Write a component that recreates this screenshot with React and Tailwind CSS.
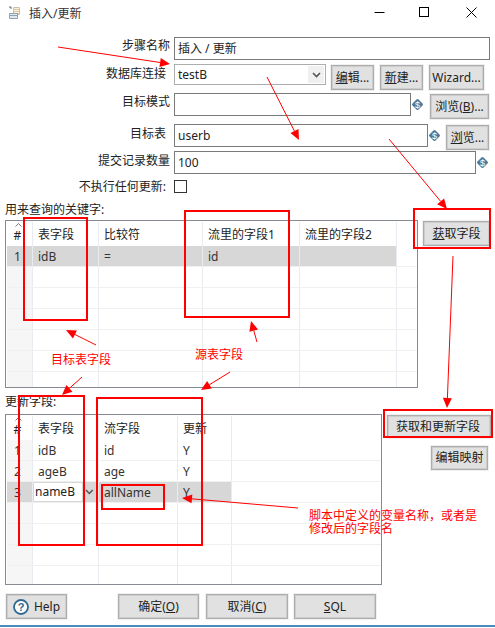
import React from 'react';

// botao padrao do dialogo
const Btn = ({ children, className = '' }) => (
  <button className={`flex items-center justify-center bg-[#e1e1e1] border border-[#adadad] shadow-[0_0_0_1px_#f0f0f0,inset_0_0_0_1px_#cdcdcd] text-[12px] text-[#222] ${className}`}>
    {children}
  </button>
);

const Var = () => (
  <svg width="13" height="13" viewBox="0 0 13 13" className="shrink-0">
    <rect x="2.2" y="2.2" width="8.6" height="8.6" rx="1.5" fill="#4f7a9a" transform="rotate(45 6.5 6.5)" />
    <text x="6.5" y="9.5" textAnchor="middle" fontSize="9" fill="#fff" fontFamily="Liberation Sans">$</text>
  </svg>
);

const Label = ({ children, className = '' }) => (
  <div className={`w-[174px] shrink-0 text-right text-[12px] text-[#222] pr-1 ${className}`}>{children}</div>
);

const Input = ({ value, w }) => (
  <div className={`h-[23px] border border-[#7a7a7a] bg-white flex items-center pl-[3px] text-[12px] text-[#222] ${w}`}>{value}</div>
);

const Table = ({ cols, width, height, columns, rows, selected }) => (
  <div className={`border border-[#868a91] bg-white overflow-hidden pl-px pt-px flex flex-col relative ${width} ${height}`}>
    <div className={`grid ${cols} h-[24px] shrink-0`}>
      {columns.map((c, i) => (
        <div key={i} className={`flex items-center text-[12px] text-[#222] border-r border-[#e8ebf0] relative ${i === 0 ? 'justify-center pr-[4px] pt-[3px]' : 'pl-[5px] pt-[2px]'}`}>
          {i === 0 && (
            <svg width="7" height="4" viewBox="0 0 7 4" className="absolute top-[1px] left-[8px]">
              <path d="M0.5 3.5L3.5 0.5L6.5 3.5" fill="none" stroke="#777" />
            </svg>
          )}
          {c}
        </div>
      ))}
      <div />
    </div>
    {Array.from({ length: 7 }).map((_, r) => {
      const row = rows[r];
      const isSel = r === selected;
      return (
        <div key={r} className={`grid ${cols} h-[21px] shrink-0 border-b border-[#f0f0f0]`}>
          {columns.map((_, i) => (
            <div key={i} className={`flex items-center text-[12px] text-[#333] border-r border-[#e8ebf0] pt-[2px] ${isSel ? 'bg-[#d7d7d7]' : i === 0 ? 'bg-[#f6f6f6]' : 'bg-white'} ${i === 0 ? 'justify-center pr-[4px]' : 'pl-[5px]'}`}>
              {row && row[i] && row[i].edit ? (
                <div className="flex items-center w-full h-full -ml-[4px] -mt-[2px]">
                  <div className="bg-white h-full w-[50px] pl-px text-[#222] leading-[18px]">{row[i].edit}</div>
                  <svg width="9" height="6" viewBox="0 0 9 6" className="ml-[3px]">
                    <path d="M1 1l3.5 3.5L8 1" fill="none" stroke="#555" strokeWidth="1.6" />
                  </svg>
                </div>
              ) : row ? row[i] : ''}
            </div>
          ))}
          <div />
        </div>
      );
    })}
  </div>
);

const Box = ({ className }) => (
  <div className={`absolute border-[2px] border-[#f00] pointer-events-none ${className}`} />
);

const Arrow = ({ x1, y1, x2, y2 }) => {
  const a = Math.atan2(y2 - y1, x2 - x1);
  const len = 10;
  const hw = 4.5;
  const bx = x2 - Math.cos(a) * len;
  const by = y2 - Math.sin(a) * len;
  const px = -Math.sin(a) * hw;
  const py = Math.cos(a) * hw;
  return (
    <g>
      <line x1={x1} y1={y1} x2={bx} y2={by} stroke="#f00" strokeWidth="1" />
      <polygon points={`${x2},${y2} ${bx + px},${by + py} ${bx - px},${by - py}`} fill="#f00" />
    </g>
  );
};

export default function App() {
  return (
    <div className="w-[495px] h-[628px] bg-white relative overflow-hidden font-['Noto_Sans','Noto_Sans_CJK_SC',sans-serif]">
      {/* barra de titulo */}
      <div className="h-[26px] flex items-center pl-[9px]">
        <svg width="12" height="13" viewBox="0 0 12 13" className="mb-[2px]">
          <path d="M4.5 1.5h6v7h-6z" fill="#f7efe0" stroke="#c9c2b4" />
          <path d="M5 3.5h5M5 5.5h5M5 7.5h5" stroke="#e3c9a0" />
          <path d="M0.5 7.5h8v5h-8z" fill="#dfe8ef" stroke="#8fa3b3" />
          <path d="M1 9.5h7" stroke="#8fa3b3" />
          <path d="M0.5 0.5l2 2" stroke="#5f7d94" strokeWidth="1.4" />
        </svg>
        <span className="ml-[8px] text-[12px] text-[#333] mt-px">插入/更新</span>
        <div className="ml-auto flex items-center mb-[2px]">
          <svg width="11" height="11" viewBox="0 0 11 11" className="mr-[34px]"><path d="M0.5 5.5h10" stroke="#000" /></svg>
          <svg width="10" height="10" viewBox="0 0 10 10" className="mr-[37px]"><rect x="0.5" y="0.5" width="9" height="9" fill="none" stroke="#000" /></svg>
          <svg width="11" height="11" viewBox="0 0 11 11" className="mr-[18px]"><path d="M0.5 0.5l10 10M10.5 0.5l-10 10" stroke="#000" /></svg>
        </div>
      </div>

      {/* formulario */}
      <div className="flex items-start mt-[11px] h-[23px]">
        <Label>步骤名称</Label>
        <Input value="插入 / 更新" w="w-[316px]" />
      </div>

      <div className="flex items-start mt-[4px] h-[26px]">
        <Label className="pr-2 mt-[1px]">数据库连接</Label>
        <div className="w-[152px] h-[21px] border border-[#adadad] flex items-center pl-[3px] text-[12px] text-[#222] relative">
          testB
          <div className="absolute right-[1px] top-[1px] bottom-[1px] w-[16px] bg-[#f0f0f0] flex items-center justify-center">
            <svg width="9" height="6" viewBox="0 0 9 6"><path d="M1 1l3.5 3.5L8 1" fill="none" stroke="#555" strokeWidth="1.6" /></svg>
          </div>
        </div>
        <Btn className="w-[43px] h-[25px] ml-[5px] mt-px"><u>编</u>辑...</Btn>
        <Btn className="w-[43px] h-[25px] ml-[6px] mt-px"><u>新</u>建...</Btn>
        <Btn className="w-[55px] h-[25px] ml-[6px] mt-px">Wizard...</Btn>
      </div>

      <div className="flex items-start mt-[3px] h-[26px]">
        <Label>目标模式</Label>
        <Input value="" w="w-[237px]" />
        <div className="h-[23px] flex items-center"><Var /></div>
        <Btn className="w-[59px] h-[25px] ml-[6px] mt-px">浏览(<u>B</u>)...</Btn>
      </div>

      <div className="flex items-start mt-[5px] h-[26px]">
        <Label className="pr-2 mt-px">目标表</Label>
        <Input value="userb" w="w-[254px]" />
        <div className="h-[23px] flex items-center"><Var /></div>
        <Btn className="w-[43px] h-[25px] ml-[5px] mt-px"><u>浏</u>览...</Btn>
      </div>

      <div className="flex items-start mt-px h-[23px]">
        <Label className="mt-px">提交记录数量</Label>
        <Input value="100" w="w-[302px]" />
        <div className="h-[23px] flex items-center"><Var /></div>
      </div>

      <div className="flex items-center mt-[6px] h-[13px]">
        <Label className="pr-2">不执行任何更新:</Label>
        <div className="w-[13px] h-[13px] border border-[#333] bg-white" />
      </div>

      <div className="ml-[5px] mt-[8px] h-[18px] text-[12px] leading-[16px] text-[#222] pt-px">用来查询的关键字:</div>

      <div className="flex items-start ml-[5px] mt-[1px] h-[168px]">
        <Table
          cols="grid-cols-[26px_66px_104px_97px_97px_1fr]"
          width="w-[413px]"
          height="h-[168px]"
          columns={['#', '表字段', '比较符', '流里的字段1', '流里的字段2']}
          rows={[['1', 'idB', '=', 'id', '']]}
          selected={0}
        />
        <Btn className="w-[67px] h-[25px] ml-[5px] mt-px"><u>获</u>取字段</Btn>
      </div>

      <div className="ml-[5px] mt-[6px] h-[20px] text-[12px] leading-[16px] text-[#222]">更新字段:</div>

      <div className="flex items-start ml-[5px] h-[171px]">
        <Table
          cols="grid-cols-[26px_66px_79px_54px_1fr]"
          width="w-[377px]"
          height="h-[171px]"
          columns={['#', '表字段', '流字段', '更新']}
          rows={[
            ['1', 'idB', 'id', 'Y'],
            ['2', 'ageB', 'age', 'Y'],
            ['3', { edit: 'nameB' }, 'allName', 'Y'],
          ]}
          selected={2}
        />
        <div className="flex flex-col items-end ml-[5px] mt-px">
          <Btn className="w-[104px] h-[23px] pr-[2px]">获取和更新字段</Btn>
          <Btn className="w-[57px] h-[24px] mt-[8px] mr-[3px]">编辑映射</Btn>
        </div>
      </div>

      {/* botoes do rodape */}
      <div className="flex items-center ml-[6px] mt-[9px] h-[25px]">
        <Btn className="w-[61px] h-[25px] gap-[5px]">
          <svg width="16" height="16" viewBox="0 0 16 16">
            <circle cx="8" cy="8" r="7" fill="#fff" stroke="#2f6a90" strokeWidth="1.8" />
            <text x="8" y="12" textAnchor="middle" fontSize="11" fontWeight="700" fill="#2f6a90" fontFamily="Liberation Sans">?</text>
          </svg>
          Help
        </Btn>
        <Btn className="w-[81px] h-[25px] ml-[51px]">确定(<u>O</u>)</Btn>
        <Btn className="w-[82px] h-[25px] ml-[7px]">取消(<u>C</u>)</Btn>
        <Btn className="w-[82px] h-[25px] ml-[6px]"><u>S</u>QL</Btn>
      </div>

      <div className="absolute left-0 right-0 bottom-[1px] h-[2px] bg-[#4a8bbd]" />

      {/* anotacoes em vermelho por cima do dialogo */}
      <Box className="left-[23px] top-[217px] w-[65px] h-[104px]" />
      <Box className="left-[184px] top-[210px] w-[106px] h-[108px]" />
      <Box className="left-[413px] top-[208px] w-[78px] h-[41px]" />
      <Box className="left-[18px] top-[395px] w-[67px] h-[151px]" />
      <Box className="left-[96px] top-[397px] w-[107px] h-[149px]" />
      <Box className="left-[101px] top-[484px] w-[64px] h-[26px]" />
      <Box className="left-[383px] top-[409px] w-[110px] h-[29px]" />

      <svg className="absolute inset-0 pointer-events-none" width="495" height="628">
        <Arrow x1={58} y1={47} x2={170} y2={64} />
        <Arrow x1={267} y1={77} x2={299} y2={140} />
        <Arrow x1={389} y1={139} x2={447} y2={209} />
        <Arrow x1={453} y1={256} x2={447} y2={408} />
        <Arrow x1={96} y1={345} x2={66} y2={330} />
        <Arrow x1={257} y1={342} x2={251} y2={321} />
        <Arrow x1={82} y1={377} x2={62} y2={395} />
        <Arrow x1={230} y1={372} x2={201} y2={390} />
        <Arrow x1={298} y1={508} x2={182} y2={498} />
      </svg>

      <div className="absolute left-[51px] top-[352px] text-[12px] leading-[16px] text-[#f00]">目标表字段</div>
      <div className="absolute left-[195px] top-[347px] text-[12px] leading-[16px] text-[#f00]">源表字段</div>
      <div className="absolute left-[309px] top-[509px] w-[172px] text-[12px] leading-[13px] text-[#f00]">
        脚本中定义的变量名称，或者是<br />修改后的字段名
      </div>
    </div>
  );
}
